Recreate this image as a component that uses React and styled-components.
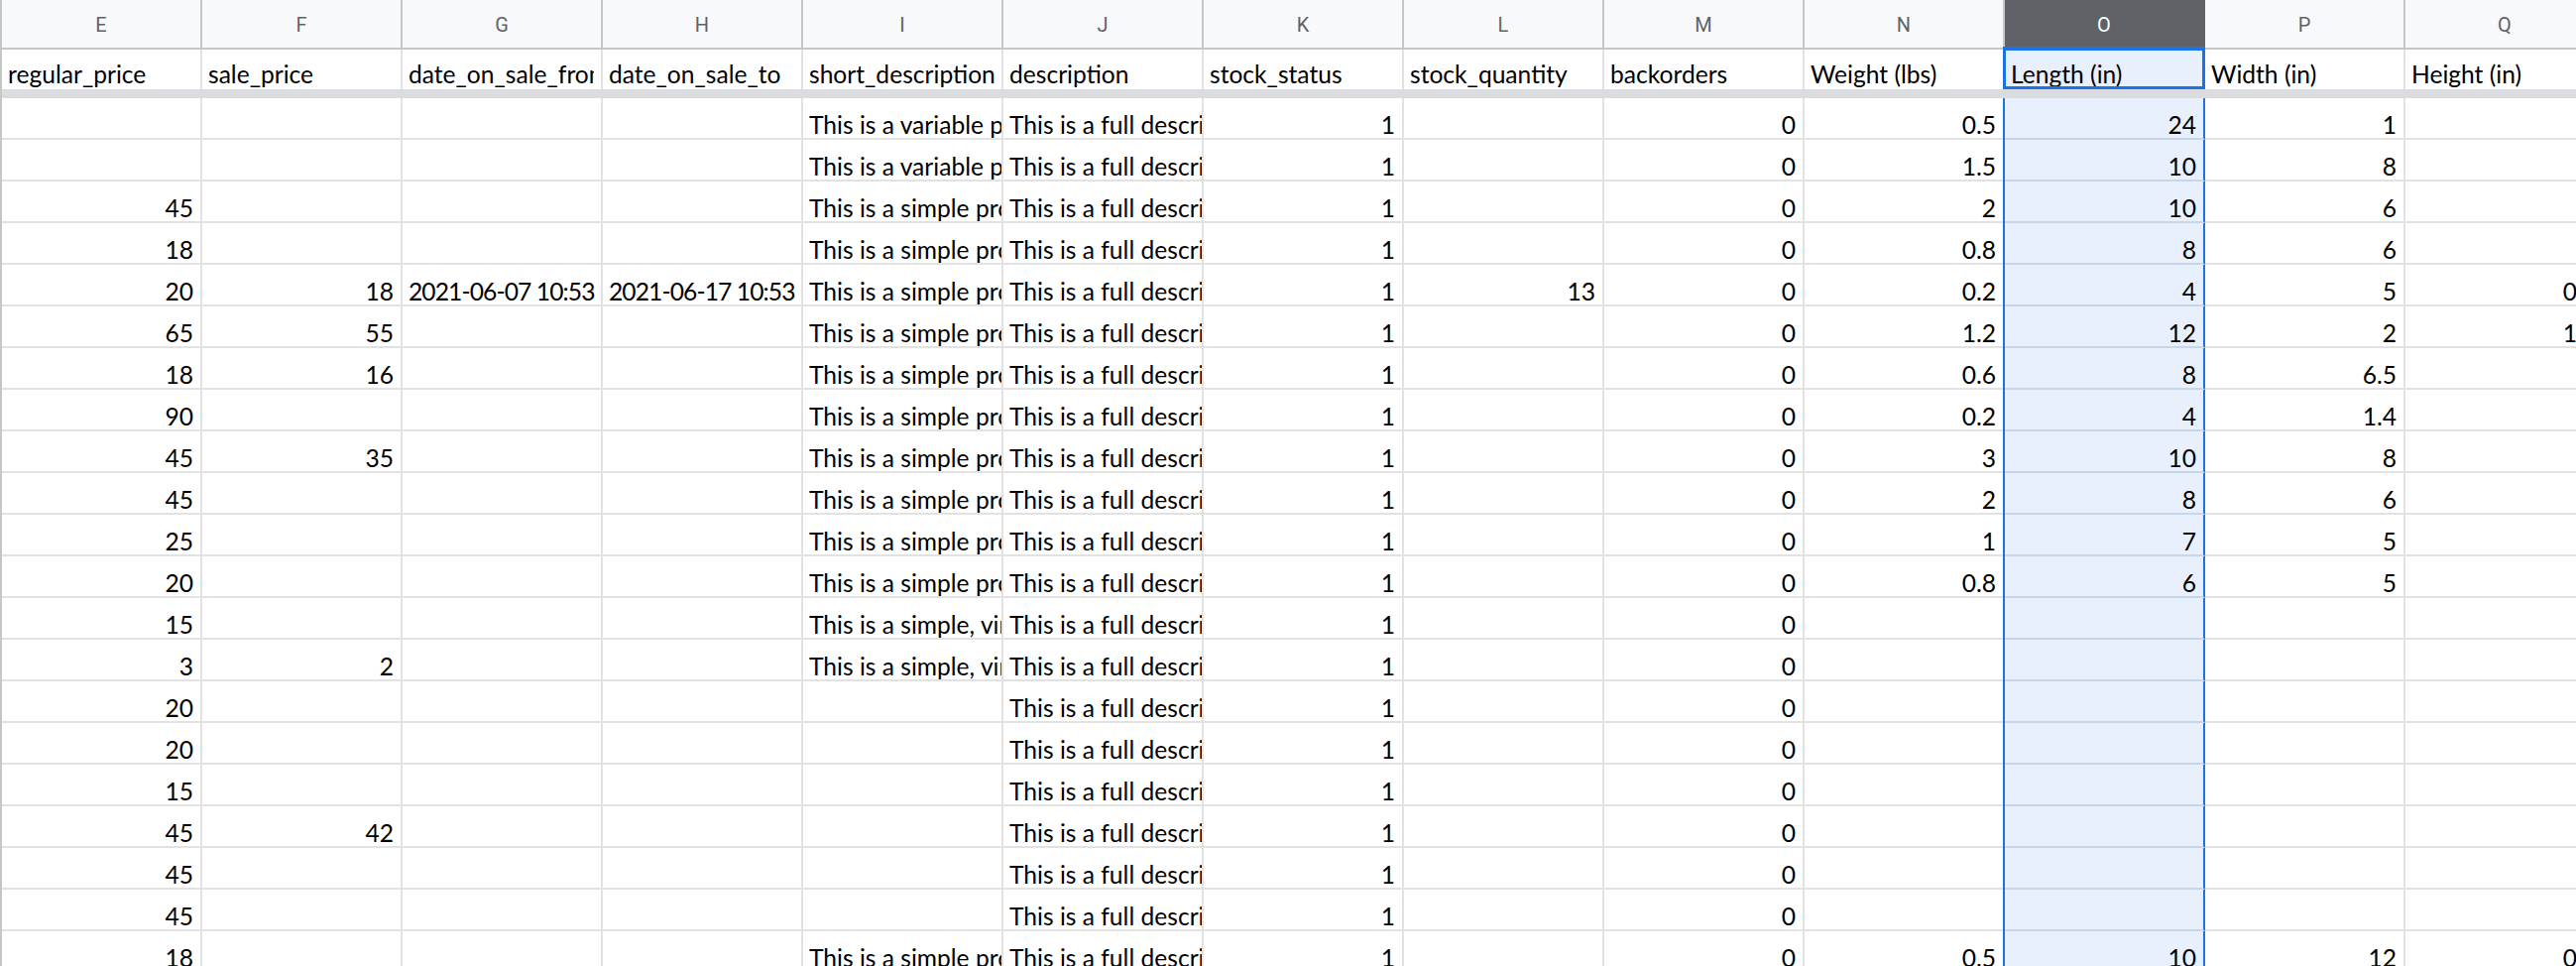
import React from "react";
import styled, { createGlobalStyle } from "styled-components";

const GlobalStyle = createGlobalStyle`
	html, body {
		margin: 0;
		padding: 0;
		overflow: hidden;
		background: #ffffff;
	}
	body {
		font-family: Lato, "Liberation Sans", sans-serif;
	}
`;

const COL_W = 202;
const SELECTED = "O";

const V = "This is a variable product.";
const S = "This is a simple product.";
const SV = "This is a simple, virtual product.";
const D = "This is a full description of the product.";

const columns = [
	{ letter: "E", title: "regular_price" },
	{ letter: "F", title: "sale_price" },
	{ letter: "G", title: "date_on_sale_from" },
	{ letter: "H", title: "date_on_sale_to" },
	{ letter: "I", title: "short_description" },
	{ letter: "J", title: "description" },
	{ letter: "K", title: "stock_status" },
	{ letter: "L", title: "stock_quantity" },
	{ letter: "M", title: "backorders" },
	{ letter: "N", title: "Weight (lbs)" },
	{ letter: "O", title: "Length (in)" },
	{ letter: "P", title: "Width (in)" },
	{ letter: "Q", title: "Height (in)" },
];

const rows = [
	["", "", "", "", V, D, 1, "", 0, 0.5, 24, 1, ""],
	["", "", "", "", V, D, 1, "", 0, 1.5, 10, 8, ""],
	[45, "", "", "", S, D, 1, "", 0, 2, 10, 6, ""],
	[18, "", "", "", S, D, 1, "", 0, 0.8, 8, 6, ""],
	[20, 18, "2021-06-07 10:53", "2021-06-17 10:53", S, D, 1, 13, 0, 0.2, 4, 5, 0.5],
	[65, 55, "", "", S, D, 1, "", 0, 1.2, 12, 2, 1.5],
	[18, 16, "", "", S, D, 1, "", 0, 0.6, 8, 6.5, ""],
	[90, "", "", "", S, D, 1, "", 0, 0.2, 4, 1.4, ""],
	[45, 35, "", "", S, D, 1, "", 0, 3, 10, 8, ""],
	[45, "", "", "", S, D, 1, "", 0, 2, 8, 6, ""],
	[25, "", "", "", S, D, 1, "", 0, 1, 7, 5, ""],
	[20, "", "", "", S, D, 1, "", 0, 0.8, 6, 5, ""],
	[15, "", "", "", SV, D, 1, "", 0, "", "", "", ""],
	[3, 2, "", "", SV, D, 1, "", 0, "", "", "", ""],
	[20, "", "", "", "", D, 1, "", 0, "", "", "", ""],
	[20, "", "", "", "", D, 1, "", 0, "", "", "", ""],
	[15, "", "", "", "", D, 1, "", 0, "", "", "", ""],
	[45, 42, "", "", "", D, 1, "", 0, "", "", "", ""],
	[45, "", "", "", "", D, 1, "", 0, "", "", "", ""],
	[45, "", "", "", "", D, 1, "", 0, "", "", "", ""],
	[18, "", "", "", S, D, 1, "", 0, 0.5, 10, 12, 0.5],
];

const Sheet = styled.div`
	width: ${2 + columns.length * COL_W}px;
	border-left: 2px solid #c4c7c5;
`;

const LetterRow = styled.div`
	display: flex;
	height: 50px;
	background: #f8f9fa;
	border-bottom: 2px solid #c4c7c5;
	box-sizing: border-box;
`;

const Letter = styled.div`
	box-sizing: border-box;
	flex: 0 0 ${COL_W}px;
	min-width: 0;
	display: flex;
	align-items: center;
	justify-content: center;
	padding-top: 2px;
	border-right: 2px solid ${(p) => (p.$selected ? "#5f6368" : "#c4c7c5")};
	background: ${(p) => (p.$selected ? "#5f6368" : "transparent")};
	color: ${(p) => (p.$selected ? "#ffffff" : "#5f6368")};
	font-family: Roboto, "Liberation Sans", sans-serif;
	font-size: 20px;
`;

const TitleRow = styled.div`
	display: flex;
	height: 40px;
`;

const FrozenBar = styled.div`
	height: 9px;
	background: #dadce0;
`;

const Row = styled.div`
	display: flex;
	height: 42px;
`;

const Cell = styled.div`
	position: relative;
	box-sizing: border-box;
	flex: 0 0 ${COL_W}px;
	min-width: 0;
	height: 100%;
	display: flex;
	align-items: flex-end;
	justify-content: ${(p) => (p.$numeric ? "flex-end" : "flex-start")};
	padding: 0 7px 0 6px;
	overflow: hidden;
	white-space: nowrap;
	font-size: 24.6px;
	line-height: 1;
	letter-spacing: ${(p) => (p.$tight ? "-0.9px" : "normal")};
	color: #000000;
	background: ${(p) => (p.$selected ? "#e8f0fe" : "#ffffff")};
	border-right: 2px solid ${(p) => (p.$selected ? "#1a73e8" : "#e2e2e3")};
	border-bottom: 2px solid ${(p) => (p.$selected ? "#c9d5e8" : "#e2e2e3")};
	box-shadow: ${(p) => (p.$selected ? "-2px 0 0 #1a73e8" : "none")};
`;

const TitleCell = styled(Cell)`
	overflow: visible;
	line-height: normal;
	padding-bottom: 1px;
	border-bottom: none;
	box-shadow: none;
	border-right-color: #e2e2e3;
`;

const TitleText = styled.span`
	display: block;
	overflow: hidden;
	min-width: 0;
	max-width: 100%;
`;

const ActiveFrame = styled.div`
	position: absolute;
	top: -3px;
	left: -2px;
	right: -2px;
	bottom: 0;
	border: 3px solid #1a73e8;
	border-top-width: 4px;
	z-index: 2;
	pointer-events: none;
`;

function isNumber(v) {
	return typeof v === "number";
}

function isDate(v) {
	return typeof v === "string" && /^\d{4}-\d{2}-\d{2}/.test(v);
}

export default function App() {
	return (
		<>
			<GlobalStyle />
			<Sheet>
				<LetterRow>
					{columns.map((c) => (
						<Letter key={c.letter} $selected={c.letter === SELECTED}>
							{c.letter}
						</Letter>
					))}
				</LetterRow>
				<TitleRow>
					{columns.map((c) => (
						<TitleCell key={c.letter} $selected={c.letter === SELECTED}>
							<TitleText>{c.title}</TitleText>
							{c.letter === SELECTED && <ActiveFrame />}
						</TitleCell>
					))}
				</TitleRow>
				<FrozenBar />
				{rows.map((r, i) => (
					<Row key={i}>
						{r.map((v, j) => (
							<Cell
								key={j}
								$numeric={isNumber(v)}
								$tight={isDate(v)}
								$selected={columns[j].letter === SELECTED}
							>
								{v === "" ? null : String(v)}
							</Cell>
						))}
					</Row>
				))}
			</Sheet>
		</>
	);
}
